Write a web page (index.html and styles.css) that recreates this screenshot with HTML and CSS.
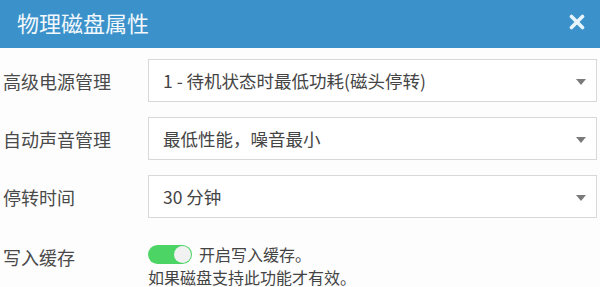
FILE: index.html
```
<!DOCTYPE html>
<html lang="zh">
<head>
	<meta charset="UTF-8" />
	<meta name="viewport" content="width=device-width, initial-scale=1.0" />
	<title>物理磁盘属性</title>
	<link rel="stylesheet" href="styles.css">
</head>
<body>
	<div class="dialog">
		<div class="dialog-head">
			<span class="dialog-title">物理磁盘属性</span>
			<svg class="dialog-close" width="16" height="16" viewBox="0 0 16 16">
				<path d="M2.5 2.5L13.5 13.5M13.5 2.5L2.5 13.5" stroke="#e8f4fb" stroke-width="3.6" stroke-linecap="round"/>
			</svg>
		</div>
		<div class="dialog-body">
			<div class="row">
				<label class="row-label">高级电源管理</label>
				<div class="select">1 - 待机状态时最低功耗(磁头停转)<i class="caret"></i></div>
			</div>
			<div class="row">
				<label class="row-label">自动声音管理</label>
				<div class="select">最低性能，噪音最小<i class="caret"></i></div>
			</div>
			<div class="row">
				<label class="row-label">停转时间</label>
				<div class="select">30 分钟<i class="caret"></i></div>
			</div>
			<div class="row row-switch">
				<label class="row-label">写入缓存</label>
				<div class="switch-box">
					<div class="switch-line">
						<span class="switch on"><i></i></span>
						<span>开启写入缓存。</span>
					</div>
					<div class="switch-tip">如果磁盘支持此功能才有效。</div>
				</div>
			</div>
		</div>
	</div>
</body>
</html>
```

FILE: styles.css
```
*{padding: 0;margin: 0;box-sizing: border-box;}
body{background: #fdfdfd;font-family: "Noto Sans CJK SC", "Noto Sans", sans-serif;color: #444;overflow: hidden;}
.dialog-head{height: 48px;background: #3b92cb;display: flex;align-items: center;justify-content: space-between;padding: 0 8px 4px 17px;}
.dialog-title{font-size: 22px;color: #f2f8fc;line-height: 1;}
.dialog-close{display: block;margin-right: 7px;}
.dialog-body{padding-top: 11px;}
.row{display: flex;align-items: center;margin-bottom: 15px;}
.row-label{width: 148px;padding-left: 3px;font-size: 18px;color: #4a4a4a;}
.select{position: relative;width: 449px;height: 43px;border: 1px solid #d8d8d8;background: #fff;padding-left: 14px;font-size: 17.5px;line-height: 41px;color: #444;}
.caret{position: absolute;right: 10px;top: 19px;width: 0;height: 0;border-left: 5px solid transparent;border-right: 5px solid transparent;border-top: 6px solid #7a7a7a;}
.row-switch{align-items: flex-start;margin-top: 25px;margin-bottom: 0;}
.row-switch .row-label{line-height: 24px;margin-top: 2px;}
.switch-line{display: flex;align-items: center;font-size: 16px;line-height: 22px;}
.switch{display: inline-block;width: 44px;height: 19px;border-radius: 10px;background: #4cd564;position: relative;margin-right: 7px;}
.switch i{position: absolute;right: 1px;top: 1px;width: 17px;height: 17px;border-radius: 50%;background: #f1f1f1;}
.switch-tip{font-size: 16px;line-height: 19px;margin-top: 3px;}
```
